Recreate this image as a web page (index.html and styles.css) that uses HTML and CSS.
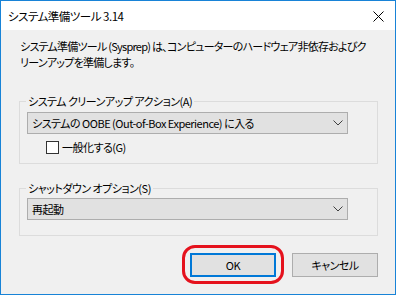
FILE: index.html
```html
<!DOCTYPE html>
<html lang="ja">
<head>
    <meta charset="UTF-8">
    <title>システム準備ツール 3.14</title>
    <link rel="stylesheet" href="styles.css">
</head>
<body>
    <div class="window">
        <div class="titlebar">
            <span class="title">システム準備ツール 3.14</span>
            <svg class="close" width="11" height="11" viewBox="0 0 11 11">
                <path d="M0.5 0.5 L10.5 10.5 M10.5 0.5 L0.5 10.5" stroke="#000" stroke-width="1" fill="none"/>
            </svg>
        </div>
        <div class="content">
            <p class="intro">システム準備ツール (Sysprep) は、コンピューターのハードウェア非依存およびク<br>リーンアップを準備します。</p>

            <fieldset class="group">
                <legend>システム クリーンアップ アクション(A)</legend>
                <div class="combo">
                    <span>システムの OOBE (Out-of-Box Experience) に入る</span>
                    <svg class="chevron" width="10" height="6" viewBox="0 0 10 6">
                        <path d="M0.5 0.5 L5 5 L9.5 0.5" stroke="#404040" stroke-width="1" fill="none"/>
                    </svg>
                </div>
                <label class="check">
                    <span class="box"></span>
                    <span>一般化する(G)</span>
                </label>
            </fieldset>

            <fieldset class="group group-shutdown">
                <legend>シャットダウン オプション(S)</legend>
                <div class="combo">
                    <span>再起動</span>
                    <svg class="chevron" width="10" height="6" viewBox="0 0 10 6">
                        <path d="M0.5 0.5 L5 5 L9.5 0.5" stroke="#404040" stroke-width="1" fill="none"/>
                    </svg>
                </div>
            </fieldset>

            <div class="buttons">
                <span class="highlight">
                    <button class="btn btn-default">OK</button>
                </span>
                <button class="btn">キャンセル</button>
            </div>
        </div>
    </div>
</body>
</html>
```

FILE: styles.css
```css
body, html {
    margin: 0;
    padding: 0;
    background: #ffffff;
}
.window {
    width: 396px;
    height: 295px;
    box-sizing: border-box;
    border: 1px solid #1883d7;
    display: flex;
    flex-direction: column;
    font-family: "Noto Sans CJK JP", "Noto Sans", sans-serif;
    font-feature-settings: "palt";
    font-size: 11px;
    letter-spacing: -0.5px;
    line-height: 16px;
    color: #000000;
}
.titlebar {
    height: 29px;
    flex: none;
    background: #ffffff;
    display: flex;
    align-items: center;
    justify-content: space-between;
    padding: 0 11px 0 7px;
}
.title {
    font-size: 11.5px;
}
.close {
    display: block;
    margin-top: 1px;
}
.content {
    flex: 1;
    background: #f0f0f0;
    padding: 8px 17px 0 18px;
}
.intro {
    margin: 0 0 0 1px;
    white-space: nowrap;
    letter-spacing: -0.75px;
}
.group {
    margin: 23px 0 0 0;
    padding: 3px 7px 8px 7px;
    border: 1px solid #dcdcdc;
}
.group legend {
    padding: 0 2px;
    margin-left: -1px;
}
.group-shutdown {
    margin-top: 16px;
    padding-top: 2px;
    padding-bottom: 15px;
}
.combo {
    height: 22px;
    box-sizing: border-box;
    width: 321px;
    border: 1px solid #adadad;
    background: #e1e1e1;
    display: flex;
    align-items: center;
    justify-content: space-between;
    padding: 0 4px 0 4px;
}
.chevron {
    display: block;
}
.check {
    display: flex;
    align-items: center;
    height: 16px;
    margin: 5px 0 0 19px;
}
.box {
    width: 13px;
    height: 13px;
    box-sizing: border-box;
    border: 1px solid #333333;
    background: #ffffff;
    margin-right: 3px;
}
.buttons {
    display: flex;
    justify-content: flex-end;
    gap: 16px;
    margin-top: 17px;
}
.btn {
    width: 86px;
    height: 24px;
    box-sizing: border-box;
    border: 1px solid #adadad;
    background: #e1e1e1;
    font: inherit;
    letter-spacing: inherit;
    color: #000000;
    padding: 0;
}
.btn-default {
    border: 2px solid #0078d7;
}
.highlight {
    position: relative;
    display: block;
}
.highlight::after {
    content: "";
    position: absolute;
    left: -8px;
    top: -8px;
    right: -8px;
    bottom: -7px;
    border: 3px solid #e5121d;
    border-radius: 13px;
}
```
